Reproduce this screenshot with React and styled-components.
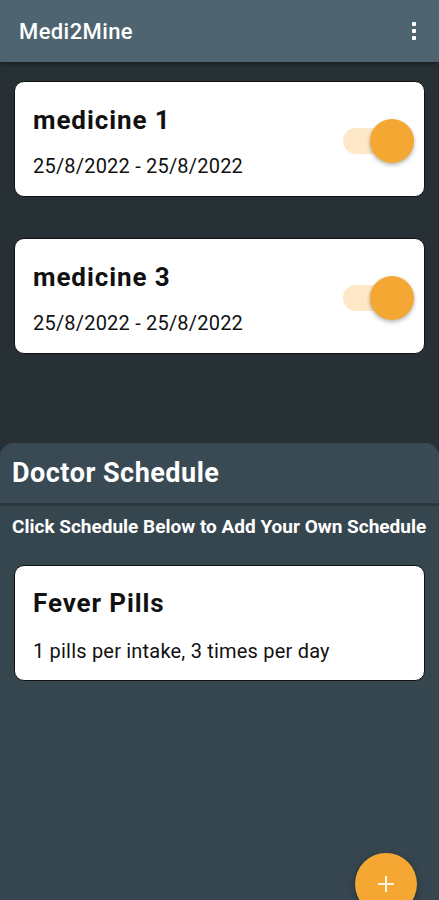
import React, { useState } from "react";
import styled, { createGlobalStyle } from "styled-components";

const GlobalStyle = createGlobalStyle`
  html, body {
    margin: 0;
    padding: 0;
    background: #263035;
  }
  body {
    font-family: Roboto, "Noto Sans", "Liberation Sans", sans-serif;
  }
`;

const Screen = styled.div`
  width: 439px;
  height: 900px;
  display: flex;
  flex-direction: column;
  background: #263035;
  overflow: hidden;
  position: relative;
`;

const AppBar = styled.div`
  height: 62px;
  flex-shrink: 0;
  display: flex;
  align-items: center;
  justify-content: space-between;
  padding: 0 23px 0 19px;
  background: #4e6470;
  box-shadow: 0 2px 4px rgba(0, 0, 0, 0.35);
`;

const AppTitle = styled.div`
  color: #ffffff;
  font-size: 22px;
  font-weight: 500;
  letter-spacing: 0.4px;
`;

const MenuDots = styled.div`
  display: flex;
  flex-direction: column;
  gap: 3px;
  span {
    width: 4px;
    height: 4px;
    background: #ffffff;
    border-radius: 1px;
  }
`;

const MedList = styled.div`
  display: flex;
  flex-direction: column;
  gap: 41px;
  padding: 19px 14px 0 14px;
`;

const Card = styled.div`
  height: 116px;
  box-sizing: border-box;
  background: #ffffff;
  border: 1.5px solid #111;
  border-radius: 10px;
  display: flex;
  align-items: center;
  justify-content: space-between;
  padding: 0 10px 0 18px;
`;

const CardText = styled.div`
  display: flex;
  flex-direction: column;
  gap: ${(p) => p.$gap}px;
  margin-top: 4px;
`;

const CardTitle = styled.div`
  font-size: 26px;
  font-weight: 700;
  letter-spacing: 0.9px;
  line-height: 30px;
  color: #111;
`;

const CardSub = styled.div`
  font-size: 20px;
  line-height: 24px;
  letter-spacing: 0.2px;
  color: #111;
`;

const SwitchWrap = styled.div`
  position: relative;
  width: 71px;
  height: 44px;
  margin-top: 4px;
  cursor: pointer;
`;

const Track = styled.div`
  position: absolute;
  left: 0;
  top: 9px;
  width: 56px;
  height: 26px;
  border-radius: 13px;
  background: ${(p) => (p.$on ? "#fde8c8" : "#d6d6d6")};
`;

const Thumb = styled.div`
  position: absolute;
  top: 0;
  left: ${(p) => (p.$on ? "27px" : "0")};
  width: 44px;
  height: 44px;
  border-radius: 50%;
  background: ${(p) => (p.$on ? "#f4a733" : "#f5f5f5")};
  box-shadow: 0 2px 4px rgba(0, 0, 0, 0.3);
`;

const Panel = styled.div`
  margin-top: 89px;
  flex: 1;
  background: #36464f;
  border-radius: 14px 14px 0 0;
  display: flex;
  flex-direction: column;
`;

const PanelHead = styled.div`
  height: 60px;
  display: flex;
  align-items: center;
  padding: 0 12px;
  background: #394a55;
  border-radius: 14px 14px 0 0;
  border-bottom: 3px solid #2b383f;
`;

const PanelTitle = styled.div`
  color: #ffffff;
  font-size: 27px;
  font-weight: 700;
  letter-spacing: 0.5px;
`;

const PanelHint = styled.div`
  color: #ffffff;
  font-size: 19px;
  line-height: 22px;
  font-weight: 700;
  padding: 10px 12px 0 12px;
  white-space: nowrap;
`;

const PanelBody = styled.div`
  padding: 27px 14px 0 14px;
`;

const Fab = styled.button`
  position: absolute;
  left: 355px;
  top: 853px;
  width: 62px;
  height: 62px;
  border: none;
  border-radius: 50%;
  background: #f4a733;
  box-shadow: 0 2px 6px rgba(0, 0, 0, 0.35);
  display: flex;
  align-items: center;
  justify-content: center;
  padding: 0;
`;

const Toggle = ({ initial }) => {
  const [on, setOn] = useState(initial);
  return (
    <SwitchWrap onClick={() => setOn(!on)}>
      <Track $on={on} />
      <Thumb $on={on} />
    </SwitchWrap>
  );
};

const medicines = [
  { name: "medicine 1", range: "25/8/2022 - 25/8/2022" },
  { name: "medicine 3", range: "25/8/2022 - 25/8/2022" },
];

const App = () => {
  return (
    <Screen>
      <GlobalStyle />
      <AppBar>
        <AppTitle>Medi2Mine</AppTitle>
        <MenuDots>
          <span />
          <span />
          <span />
        </MenuDots>
      </AppBar>
      <MedList>
        {medicines.map((med, index) => (
          <Card key={index}>
            <CardText $gap={19}>
              <CardTitle>{med.name}</CardTitle>
              <CardSub>{med.range}</CardSub>
            </CardText>
            <Toggle initial={true} />
          </Card>
        ))}
      </MedList>
      <Panel>
        <PanelHead>
          <PanelTitle>Doctor Schedule</PanelTitle>
        </PanelHead>
        <PanelHint>Click Schedule Below to Add Your Own Schedule</PanelHint>
        <PanelBody>
          <Card>
            <CardText $gap={21}>
              <CardTitle>Fever Pills</CardTitle>
              <CardSub>1 pills per intake, 3 times per day</CardSub>
            </CardText>
          </Card>
        </PanelBody>
      </Panel>
      <Fab>
        <svg width="18" height="18" viewBox="0 0 18 18">
          <path d="M9 1v16M1 9h16" stroke="#fff4de" strokeWidth="2" />
        </svg>
      </Fab>
    </Screen>
  );
};

export default App;
